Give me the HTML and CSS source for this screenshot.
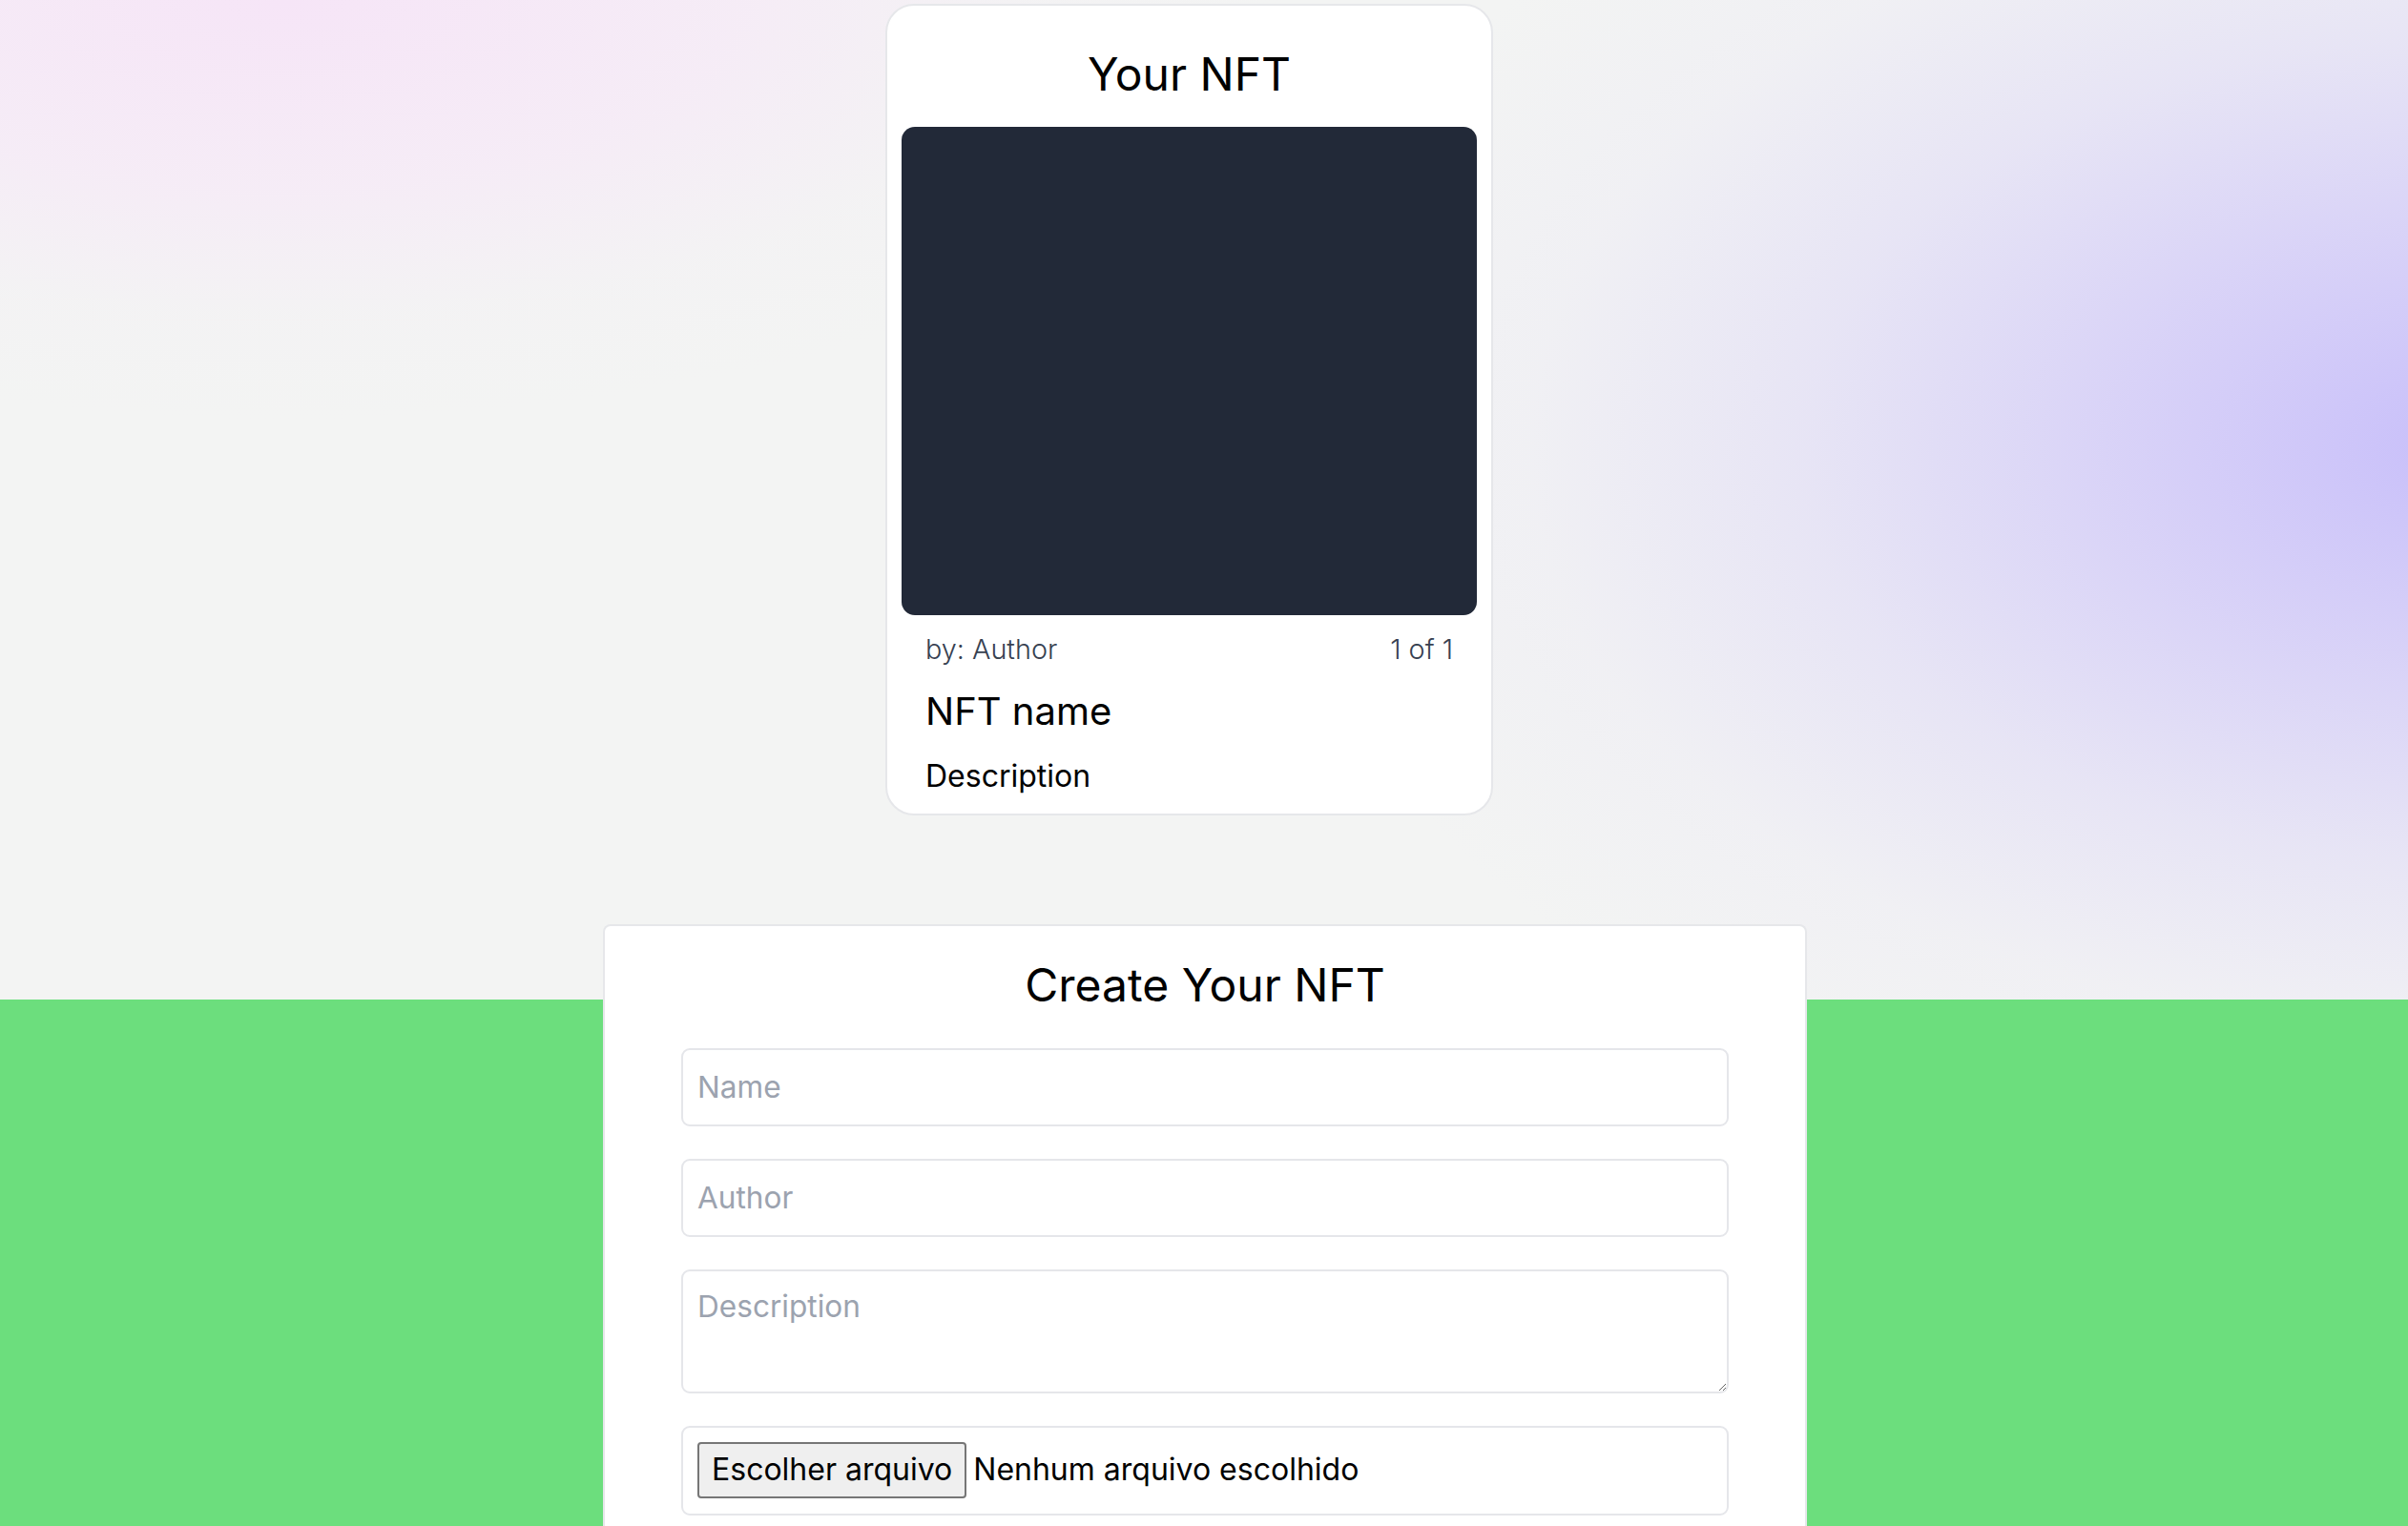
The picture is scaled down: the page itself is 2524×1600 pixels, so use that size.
FILE: index.html
```html
<!DOCTYPE html>
<html lang="pt">
<head>
<meta charset="utf-8">
<title>Create Your NFT</title>
<link rel="stylesheet" href="styles.css">
</head>
<body>
<div class="page">
  <section class="preview">
    <div class="nft-card">
      <h2 class="nft-card__title">Your NFT</h2>
      <div class="nft-card__image"></div>
      <div class="nft-card__meta">
        <span>by: Author</span>
        <span>1 of 1</span>
      </div>
      <h3 class="nft-card__name">NFT name</h3>
      <p class="nft-card__desc">Description</p>
    </div>
  </section>

  <section class="create">
    <form class="form-card">
      <h2 class="form-card__title">Create Your NFT</h2>
      <input class="field" type="text" placeholder="Name">
      <input class="field" type="text" placeholder="Author">
      <textarea class="field field--area" placeholder="Description"></textarea>
      <div class="field field--file">
        <span class="file-btn">Escolher arquivo</span>
        <span class="file-name">Nenhum arquivo escolhido</span>
      </div>
    </form>
  </section>
</div>
</body>
</html>
```

FILE: styles.css
```css
* {
  box-sizing: border-box;
}

html, body {
  margin: 0;
  padding: 0;
}

body {
  font-family: Inter, "Noto Sans", sans-serif;
  color: #000;
}

.page {
  height: 1600px;
  overflow: hidden;
  display: flex;
  flex-direction: column;
  background:
    linear-gradient(to bottom, transparent 1048px, #6cde7d 1048px),
    radial-gradient(ellipse 1250px 780px at 2580px 470px, rgba(200, 191, 250, 1) 0%, rgba(213, 206, 248, 0.9) 28%, rgba(226, 222, 246, 0.7) 55%, rgba(236, 234, 245, 0.4) 78%, rgba(243, 243, 243, 0) 100%),
    radial-gradient(ellipse 1050px 440px at 300px 0px, rgba(246, 229, 247, 1) 0%, rgba(246, 234, 247, 0.8) 45%, rgba(244, 240, 245, 0.35) 75%, rgba(243, 243, 243, 0) 100%),
    #f3f4f3;
}

.preview {
  display: flex;
  justify-content: center;
  padding-top: 4px;
}

.nft-card {
  width: 637px;
  margin-right: 31px;
  background: #fff;
  border: 2px solid #e6e7ea;
  border-radius: 30px;
  padding: 15px 15px 16px;
  display: flex;
  flex-direction: column;
}

.nft-card__title {
  margin: 28px 0 0;
  font-size: 48px;
  line-height: 57.6px;
  font-weight: 400;
  text-align: center;
}

.nft-card__image {
  margin-top: 26px;
  height: 512px;
  background: #222938;
  border-radius: 14px;
}

.nft-card__meta {
  margin-top: 14px;
  padding: 0 25px;
  display: flex;
  justify-content: space-between;
  font-size: 28.8px;
  line-height: 44.8px;
  font-weight: 300;
  color: #374151;
}

.nft-card__name {
  margin: 16px 0 0;
  padding: 0 25px;
  font-size: 40px;
  line-height: 53px;
  font-weight: 400;
}

.nft-card__desc {
  margin: 20px 0 0;
  padding: 0 25px;
  font-size: 32px;
  line-height: 44.8px;
}

.create {
  display: flex;
  justify-content: center;
  margin-top: 114px;
}

.form-card {
  width: 1262px;
  margin-left: 2px;
  background: #fff;
  border: 2px solid #e6e7ea;
  border-bottom: none;
  border-radius: 8px 8px 0 0;
  padding: 33px 80px 200px;
  display: flex;
  flex-direction: column;
  gap: 34px;
}

.form-card__title {
  margin: 0 0 3px;
  font-size: 48px;
  line-height: 57.6px;
  font-weight: 400;
  text-align: center;
}

.field {
  display: block;
  width: 100%;
  height: 82px;
  margin: 0;
  padding: 0 15px;
  border: 2px solid #e5e6ea;
  border-radius: 9px;
  background: #fff;
  font-family: Inter, "Noto Sans", sans-serif;
  font-size: 31.6px;
  line-height: 44.8px;
  color: #000;
  outline: none;
}

.field::placeholder {
  color: #9ca3af;
  opacity: 1;
}

.field--area {
  height: 130px;
  padding: 15px 15px;
  resize: vertical;
}

.field--file {
  height: 94px;
  display: flex;
  align-items: center;
  padding: 0 15px;
  font-size: 32px;
}

.file-btn {
  display: inline-flex;
  align-items: center;
  height: 59px;
  padding: 0 13px;
  background: #efefef;
  border: 2px solid #767676;
  border-radius: 4px;
  margin-right: 7px;
  white-space: nowrap;
}

.file-name {
  white-space: nowrap;
}
```
